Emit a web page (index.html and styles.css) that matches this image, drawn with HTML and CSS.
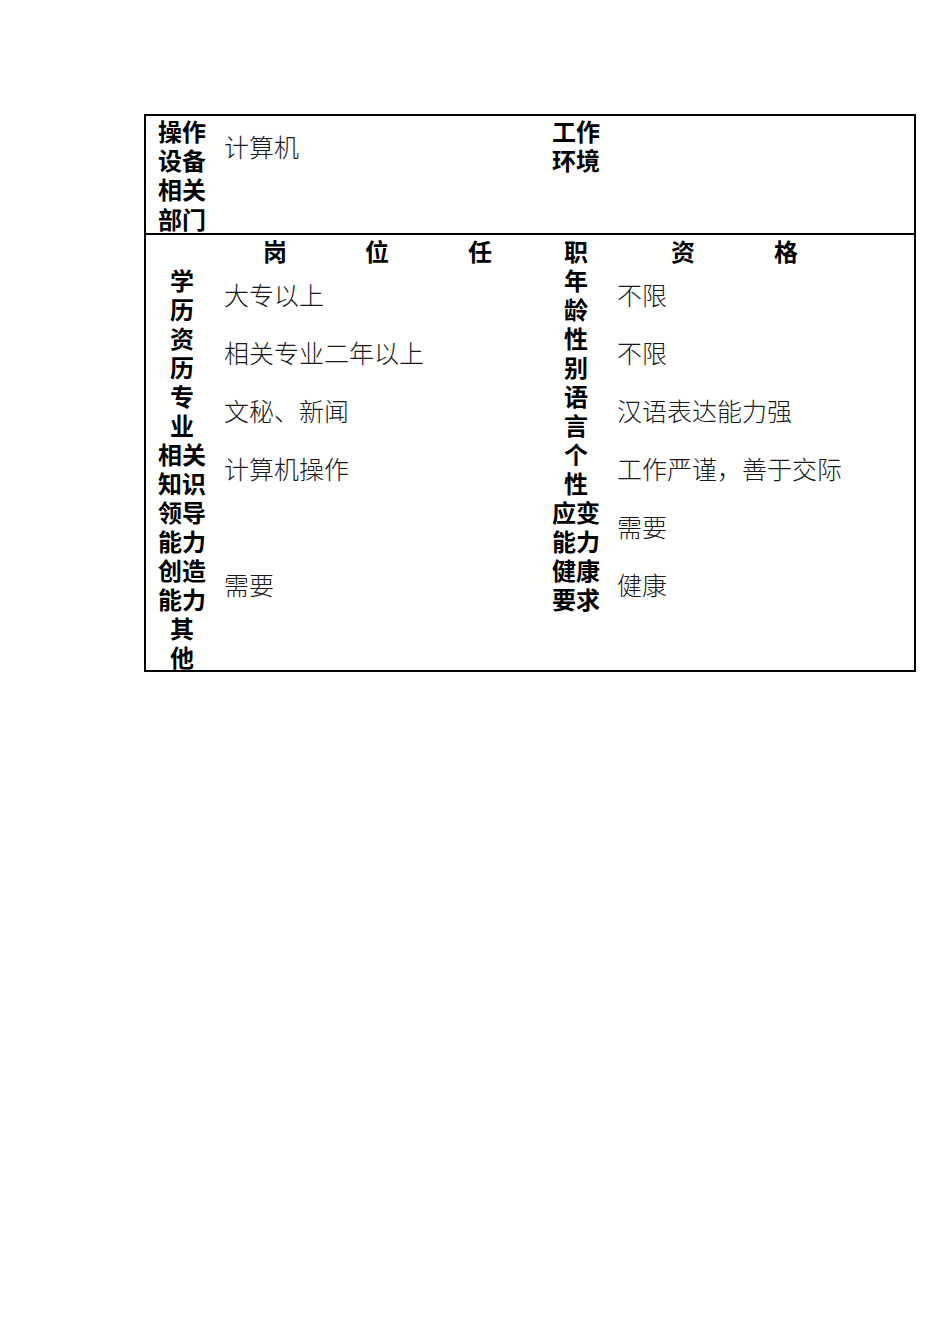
FILE: index.html
```html
<!DOCTYPE html>
<html lang="zh-CN">
<head>
<meta charset="utf-8">
<title>岗位说明</title>
<link rel="stylesheet" href="styles.css">
</head>
<body>
<div class="sheet">
  <div class="top">
    <div class="label">操作<br>设备<br>相关<br>部门</div>
    <div class="vals">
      <div class="val">计算机</div>
    </div>
    <div class="label">工作<br>环境</div>
    <div class="vals"></div>
  </div>
  <div class="bottom">
    <div class="head">
      <span class="h1">岗</span><span class="h2">位</span><span class="h3">任</span><span class="h4">职</span><span class="h5">资</span><span class="h6">格</span>
    </div>
    <div class="grid">
      <div class="label">学<br>历</div><div class="val">大专以上</div><div class="label">年<br>龄</div><div class="val">不限</div>
      <div class="label">资<br>历</div><div class="val">相关专业二年以上</div><div class="label">性<br>别</div><div class="val">不限</div>
      <div class="label">专<br>业</div><div class="val">文秘、新闻</div><div class="label">语<br>言</div><div class="val">汉语表达能力强</div>
      <div class="label">相关<br>知识</div><div class="val">计算机操作</div><div class="label">个<br>性</div><div class="val">工作严谨，善于交际</div>
      <div class="label">领导<br>能力</div><div class="val"></div><div class="label">应变<br>能力</div><div class="val">需要</div>
      <div class="label">创造<br>能力</div><div class="val">需要</div><div class="label">健康<br>要求</div><div class="val">健康</div>
      <div class="label">其<br>他</div><div class="val"></div><div class="label"></div><div class="val"></div>
    </div>
  </div>
</div>
</body>
</html>
```

FILE: styles.css
```css
html, body {
  margin: 0;
  padding: 0;
  background: #ffffff;
}
body {
  font-family: "Noto Sans CJK SC", "Liberation Sans", sans-serif;
  color: #000;
}
.sheet {
  margin-left: 144px;
  margin-top: 114px;
  width: 768px;
  border: 2px solid #000;
}
.top {
  display: grid;
  grid-template-columns: 72px 322px 72px 1fr;
  border-bottom: 2px solid #000;
  height: 117px;
}
.label {
  font-size: 24px;
  font-weight: 700;
  line-height: 29.2px;
  text-align: center;
}
.vals {
  padding-left: 6px;
}
.val {
  font-size: 25px;
  font-weight: 300;
  color: #1a1a1a;
  line-height: 58px;
  height: 58px;
  padding-left: 6px;
  white-space: nowrap;
}
.vals .val {
  padding-left: 0;
  line-height: 60px;
}
.bottom {
  padding-top: 1px;
  height: 434px;
}
.head {
  display: flex;
  padding-left: 117px;
  font-size: 24px;
  font-weight: 700;
  line-height: 29px;
  height: 29px;
}
.head span {
  width: 24px;
  text-align: center;
}
.head .h2 { margin-left: 78px; }
.head .h3 { margin-left: 79px; }
.head .h4 { margin-left: 72px; }
.head .h5 { margin-left: 83px; }
.head .h6 { margin-left: 79px; }
.grid {
  display: grid;
  grid-template-columns: 72px 322px 72px 1fr;
  grid-auto-rows: 58px;
}
.grid .label {
  line-height: 29px;
}
.grid .val:nth-child(4n) {
  padding-left: 5px;
}
```
